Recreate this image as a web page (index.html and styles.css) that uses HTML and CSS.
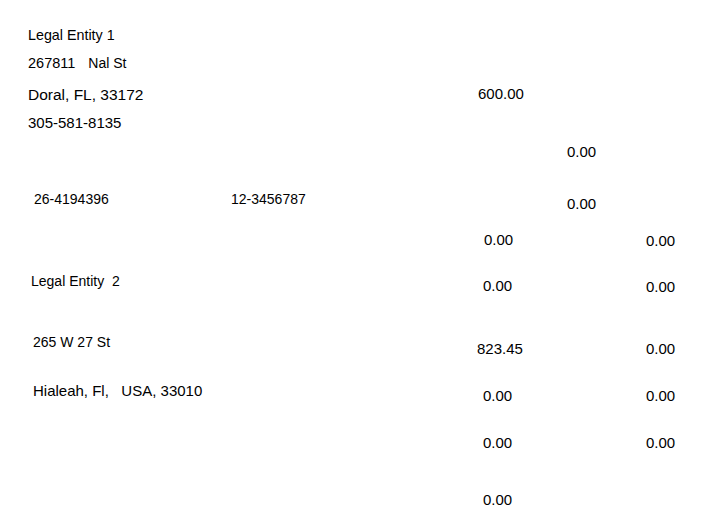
FILE: index.html
```html
<!DOCTYPE html>
<html>
<head>
<meta charset="utf-8">
<link rel="stylesheet" href="styles.css">
</head>
<body>
<div class="page">
  <div class="left">
    <div class="ln l1 f143">Legal Entity 1</div>
    <div class="ln l2 split"><span class="f145">267811</span><span class="street">Nal St</span></div>
    <div class="ln l3 f155">Doral, FL, 33172</div>
    <div class="ln l4 f15">305-581-8135</div>
    <div class="ln l5 tins"><span class="tin1">26-4194396</span><span>12-3456787</span></div>
    <div class="ln l6">Legal Entity  2</div>
    <div class="ln l7">265 W 27 St</div>
    <div class="ln l8 f15">Hialeah, Fl,   USA, 33010</div>
  </div>
  <div class="right">
    <div class="row r1"><span class="ca p1">600.00</span></div>
    <div class="row r2"><span class="ca"></span><span class="cb">0.00</span></div>
    <div class="row r3"><span class="ca"></span><span class="cb">0.00</span></div>
    <div class="row r4"><span class="ca p7">0.00</span><span class="cb"></span><span class="cc low">0.00</span></div>
    <div class="row r5"><span class="ca p6">0.00</span><span class="cb"></span><span class="cc low">0.00</span></div>
    <div class="row r6"><span class="ca">823.45</span><span class="cb"></span><span class="cc">0.00</span></div>
    <div class="row r7"><span class="ca p6">0.00</span><span class="cb"></span><span class="cc">0.00</span></div>
    <div class="row r8"><span class="ca p6">0.00</span><span class="cb"></span><span class="cc">0.00</span></div>
    <div class="row r9"><span class="ca p6">0.00</span></div>
  </div>
</div>
</body>
</html>
```
FILE: styles.css
```css
html, body {
  margin: 0;
  padding: 0;
  background: #ffffff;
}
body {
  font-family: "Liberation Sans", Arial, sans-serif;
  font-size: 14px;
  line-height: 16px;
  color: #000000;
  width: 702px;
  height: 525px;
  overflow: hidden;
}
.page {
  display: flex;
}
.left {
  flex: 0 0 477px;
}
.ln {
  white-space: pre;
  height: 16px;
}
.f143 { font-size: 14.3px; }
.f145 { font-size: 14.5px; }
.f15 { font-size: 15px; }
.f155 { font-size: 15.5px; }
.l1 { margin-top: 27px; padding-left: 28px; }
.l2 { margin-top: 12px; padding-left: 28px; }
.l3 { margin-top: 16px; padding-left: 28px; }
.l4 { margin-top: 12px; padding-left: 28px; }
.l5 { margin-top: 60px; padding-left: 34px; }
.l6 { margin-top: 66px; padding-left: 31px; }
.l7 { margin-top: 45px; padding-left: 33px; }
.l8 { margin-top: 33px; padding-left: 33px; }
.split {
  display: flex;
  align-items: baseline;
}
.street {
  margin-left: 13px;
}
.tins {
  display: flex;
}
.tin1 {
  flex: 0 0 197px;
}
.right {
  flex: 1;
  font-size: 15px;
}
.row {
  display: flex;
  height: 16px;
}
.r1 { margin-top: 86px; }
.r2 { margin-top: 42px; }
.r3 { margin-top: 36px; }
.r4 { margin-top: 20px; }
.r5 { margin-top: 30px; }
.r6 { margin-top: 47px; }
.r7 { margin-top: 31px; }
.r8 { margin-top: 31px; }
.r9 { margin-top: 41px; }
.ca { flex: 0 0 90px; box-sizing: border-box; }
.cb { flex: 0 0 79px; }
.cc { flex: 0 0 auto; }
.p1 { padding-left: 1px; }
.p6 { padding-left: 6px; }
.p7 { padding-left: 7px; }
.low { position: relative; top: 1px; }
```
